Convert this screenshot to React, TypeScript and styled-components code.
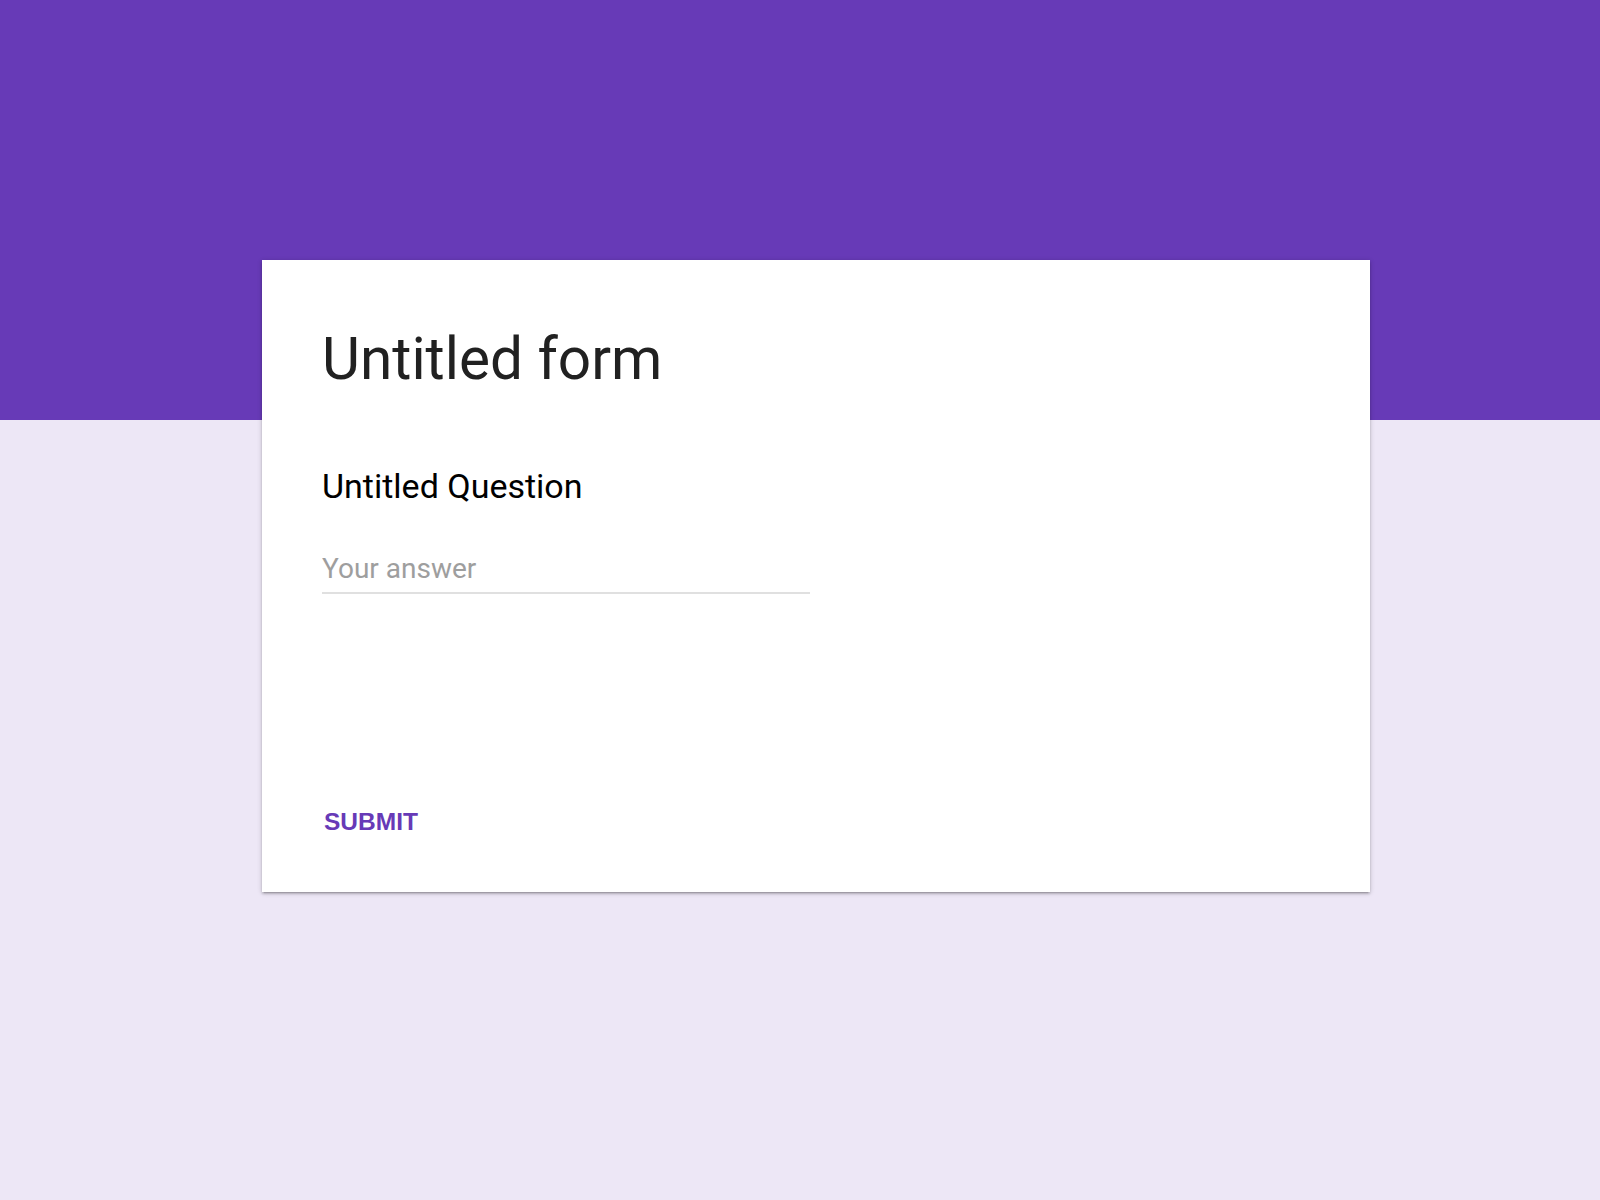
import React from "react";
import styled, { createGlobalStyle } from "styled-components";

const Global = createGlobalStyle`
  html, body { margin: 0; padding: 0; }
  body { font-family: Roboto, "Noto Sans", sans-serif; }
`;

const Page = styled.div`
  min-height: 1200px;
  background: linear-gradient(#673ab7 0, #673ab7 420px, #ede7f6 420px, #ede7f6 100%);
  padding-top: 260px;
  box-sizing: border-box;
`;

const Card = styled.main`
  margin-left: 262px;
  width: 1108px;
  height: 632px;
  background: #fff;
  box-shadow: 0 2px 2px rgba(0, 0, 0, 0.14), 0 3px 1px -2px rgba(0, 0, 0, 0.12),
    0 1px 5px rgba(0, 0, 0, 0.2);
  box-sizing: border-box;
  padding: 65px 60px 0 60px;
  display: flex;
  flex-direction: column;
`;

const Title = styled.h1`
  margin: 0;
  font-family: Roboto, sans-serif;
  font-weight: 400;
  font-size: 58.5px;
  line-height: 68px;
  color: #212121;
`;

const Question = styled.div`
  margin-top: 73px;
  font-family: Roboto, sans-serif;
  font-size: 34px;
  line-height: 40px;
  color: #000;
`;

const Answer = styled.input`
  margin-top: 46px;
  width: 488px;
  border: none;
  border-bottom: 2px solid #e0e0e0;
  padding: 0 0 6px 0;
  font-family: Roboto, sans-serif;
  font-size: 28px;
  line-height: 34px;
  color: #212121;
  outline: none;
  background: transparent;
  &::placeholder { color: #9e9e9e; }
`;

const Submit = styled.button`
  margin-top: 213px;
  align-self: flex-start;
  border: none;
  background: transparent;
  padding: 0 0 0 2px;
  font-family: "Liberation Sans", Arial, sans-serif;
  font-weight: 700;
  font-size: 24.5px;
  line-height: 30px;
  color: #673ab7;
  cursor: pointer;
`;

export default function App() {
  return (
    <>
      <Global />
      <Page>
        <Card>
          <Title>Untitled form</Title>
          <Question>Untitled Question</Question>
          <Answer placeholder="Your answer" />
          <Submit>SUBMIT</Submit>
        </Card>
      </Page>
    </>
  );
}
